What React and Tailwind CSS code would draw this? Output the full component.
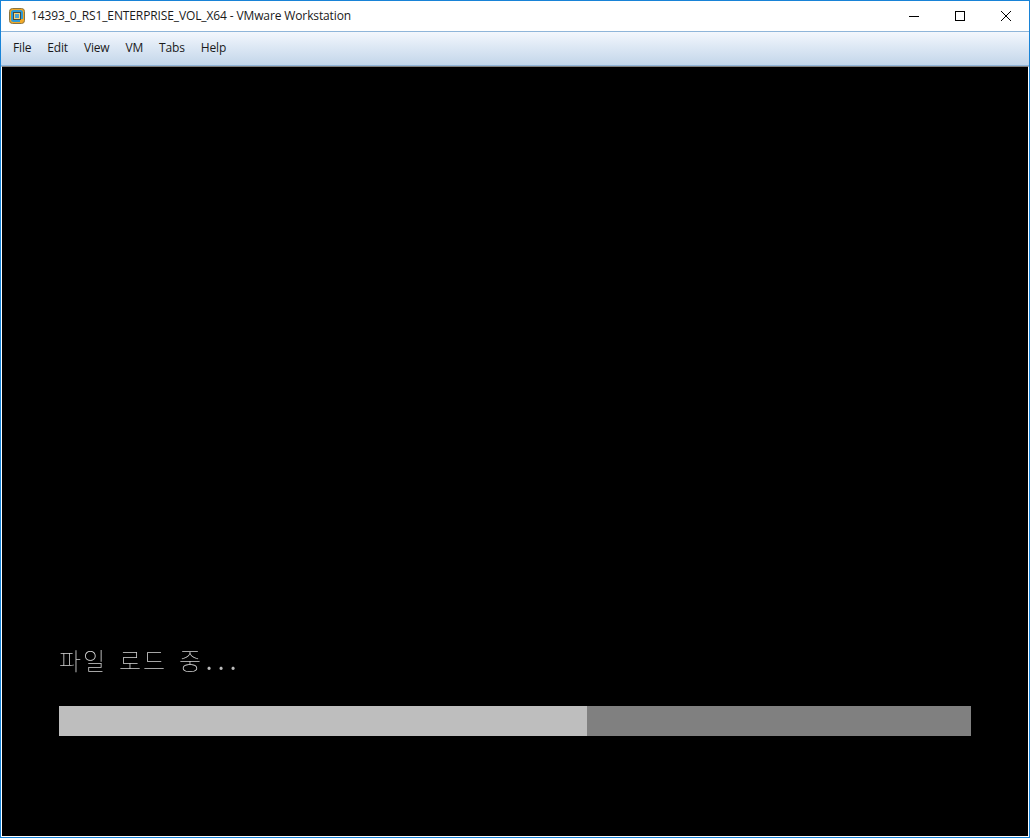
import React from 'react';

const menus = ['File', 'Edit', 'View', 'VM', 'Tabs', 'Help'];

const AppIcon = () => (
  <svg width="16" height="16" viewBox="0 0 16 16" className="shrink-0">
    <rect x="0.5" y="0.5" width="15" height="15" rx="3" fill="#f2a927" stroke="#8a7440" />
    <path d="M2 4.5A2.5 2.5 0 0 1 4.5 2h7A2.5 2.5 0 0 1 14 4.5V11h-2.5V4.5h-7v7H11V14H4.5A2.5 2.5 0 0 1 2 11.5z" fill="#2e9ad6" />
    <rect x="4.5" y="4.5" width="7" height="7" fill="#f9d27a" stroke="#4a4a3a" />
    <rect x="6" y="6" width="4" height="4" fill="#4aa3d8" />
  </svg>
);

export default function App() {
  return (
    <div className="w-[1030px] h-[838px] flex flex-col bg-white border border-[#1883d7] font-['Open_Sans',sans-serif]">
      {/* Title bar */}
      <div className="h-[30px] shrink-0 flex items-center pl-[8px] bg-white">
        <AppIcon />
        <span className="ml-[6px] text-[12px] tracking-[-0.12px] text-[#1a1a1a]">14393_0_RS1_ENTERPRISE_VOL_X64 - VMware Workstation</span>
        <div className="ml-auto flex items-center">
          <div className="w-[46px] flex justify-center">
            <svg width="10" height="10" viewBox="0 0 10 10"><path d="M0 5.5h10" stroke="#000" fill="none" /></svg>
          </div>
          <div className="w-[46px] flex justify-center">
            <svg width="10" height="10" viewBox="0 0 10 10"><rect x="0.5" y="0.5" width="9" height="9" stroke="#000" fill="none" /></svg>
          </div>
          <div className="w-[46px] flex justify-center">
            <svg width="10" height="10" viewBox="0 0 10 10"><path d="M0 0l10 10M10 0L0 10" stroke="#000" fill="none" /></svg>
          </div>
        </div>
      </div>

      {/* Menu bar */}
      <div className="h-[35px] shrink-0 flex items-center pl-[4px] pb-[2px] border-y border-[#8fb5d9] bg-gradient-to-b from-[#f3f7fd] to-[#c3d6ea] text-[12px] tracking-[-0.17px] text-[#1a1a1a]">
        {menus.map((m) => (
          <span key={m} className="px-[8px]">{m}</span>
        ))}
      </div>

      {/* Guest screen */}
      <div className="flex-1 flex flex-col bg-black border-x border-b border-white border-t border-t-[#808080] pl-[57px] pr-[57px] pt-[578px]">
        <div className="flex h-[30px] items-center text-[24px] leading-[30px] text-[#d4d4d4] font-thin will-change-transform font-['Noto_Sans_CJK_KR',sans-serif]">
          <span className="w-[24px]">파</span>
          <span className="w-[24px]">일</span>
          <span className="w-[12px]"> </span>
          <span className="w-[24px]">로</span>
          <span className="w-[24px]">드</span>
          <span className="w-[12px]"> </span>
          <span className="w-[24px]">중</span>
          <span className="w-[12px] text-center font-normal text-[#bdbdbd]">.</span>
          <span className="w-[12px] text-center font-normal text-[#bdbdbd]">.</span>
          <span className="w-[12px] text-center font-normal text-[#bdbdbd]">.</span>
        </div>
        <div className="mt-[31px] h-[30px] flex bg-[#808080]">
          <div className="w-[528px] bg-[#bebebe]" />
        </div>
      </div>
    </div>
  );
}
